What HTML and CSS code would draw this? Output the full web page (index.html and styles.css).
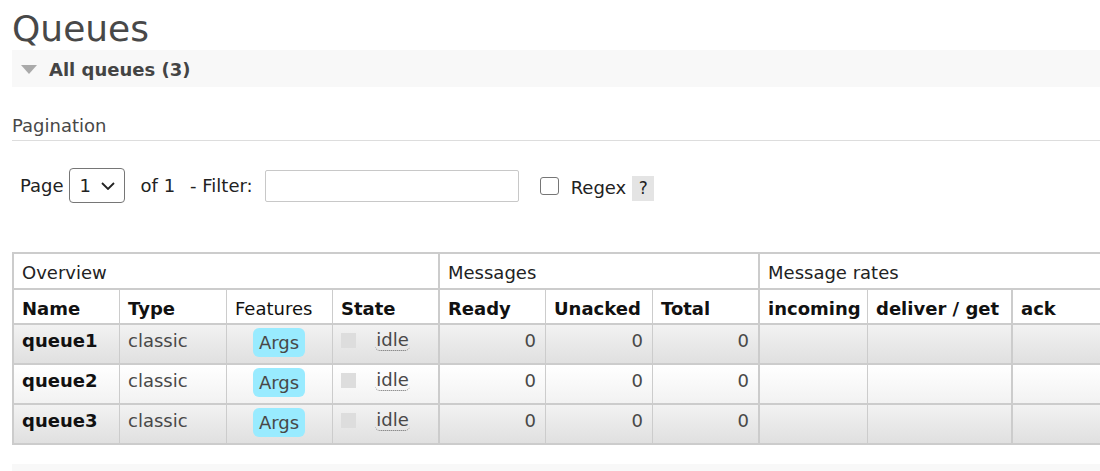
FILE: index.html
```html
<!DOCTYPE html>
<html lang="en">
<head>
<meta charset="utf-8">
<title>Queues</title>
<link rel="stylesheet" href="styles.css">
</head>
<body>
<main class="page">
  <h1 class="title">Queues</h1>
  <div class="section-head">
    <span class="toggle"></span>
    <h2 class="section-title">All queues (3)</h2>
  </div>
  <h3 class="sub-title">Pagination</h3>
  <form class="pager">
    <span class="lbl">Page</span>
    <div class="select">
      <span class="select-val">1</span>
      <svg class="chev" width="14" height="8" viewBox="0 0 14 8"><polyline points="1,1 7,7 13,1" fill="none" stroke="#222" stroke-width="1.8"/></svg>
    </div>
    <span class="lbl of">of 1</span>
    <span class="lbl filter">- Filter:</span>
    <input class="filter-input" type="text">
    <input class="check" type="checkbox">
    <span class="lbl regex">Regex</span>
    <span class="help">?</span>
  </form>

  <table class="list">
    <colgroup>
      <col class="c-name"><col class="c-type"><col class="c-feat"><col class="c-state">
      <col class="c-ready"><col class="c-unacked"><col class="c-total">
      <col class="c-in"><col class="c-deliver"><col class="c-ack">
    </colgroup>
    <thead>
      <tr class="groups">
        <th colspan="4" class="grp-end">Overview</th>
        <th colspan="3" class="grp-end">Messages</th>
        <th colspan="3" class="grp-end">Message rates</th>
      </tr>
      <tr class="cols">
        <th>Name</th>
        <th>Type</th>
        <th class="plain">Features</th>
        <th class="grp-end">State</th>
        <th>Ready</th>
        <th>Unacked</th>
        <th class="grp-end">Total</th>
        <th>incoming</th>
        <th class="grp-end">deliver / get</th>
        <th>ack</th>
      </tr>
    </thead>
    <tbody>
      <tr class="alt1">
        <td class="name">queue1</td>
        <td>classic</td>
        <td class="feat"><span class="badge">Args</span></td>
        <td class="state grp-end"><span class="key"></span><span class="idle">idle</span></td>
        <td class="num">0</td>
        <td class="num">0</td>
        <td class="num grp-end">0</td>
        <td></td>
        <td class="grp-end"></td>
        <td></td>
      </tr>
      <tr class="alt2">
        <td class="name">queue2</td>
        <td>classic</td>
        <td class="feat"><span class="badge">Args</span></td>
        <td class="state grp-end"><span class="key"></span><span class="idle">idle</span></td>
        <td class="num">0</td>
        <td class="num">0</td>
        <td class="num grp-end">0</td>
        <td></td>
        <td class="grp-end"></td>
        <td></td>
      </tr>
      <tr class="alt1">
        <td class="name">queue3</td>
        <td>classic</td>
        <td class="feat"><span class="badge">Args</span></td>
        <td class="state grp-end"><span class="key"></span><span class="idle">idle</span></td>
        <td class="num">0</td>
        <td class="num">0</td>
        <td class="num grp-end">0</td>
        <td></td>
        <td class="grp-end"></td>
        <td></td>
      </tr>
    </tbody>
  </table>

  <div class="footer-bar"></div>
</main>
</body>
</html>
```

FILE: styles.css
```css
html {
  overflow: hidden;
}

body {
  margin: 0;
  font-family: "DejaVu Sans", Verdana, sans-serif;
  color: #484848;
  background: #fff;
}

.page {
  padding-left: 12px;
}

.title {
  margin: 8px 0 0;
  font-size: 36px;
  line-height: 42px;
  font-weight: normal;
  color: #484848;
}

.section-head {
  display: flex;
  align-items: center;
  height: 37px;
  background: #f8f8f8;
}

.toggle {
  width: 0;
  height: 0;
  border-left: 8.5px solid transparent;
  border-right: 8.5px solid transparent;
  border-top: 9px solid #aaa;
  margin: 2px 12px 0 9px;
}

.section-title {
  margin: 2px 0 0;
  font-size: 18px;
  line-height: 21px;
  font-weight: bold;
  color: #444;
}

.sub-title {
  margin: 29px 0 0;
  font-size: 18px;
  line-height: 20px;
  font-weight: normal;
  padding-bottom: 4px;
  border-bottom: 1px solid #ddd;
  color: #484848;
}

.pager {
  display: flex;
  align-items: center;
  height: 35px;
  margin: 27px 0 0 8px;
}

.lbl {
  font-size: 18px;
  line-height: 21px;
  color: #222;
}

.select {
  display: flex;
  align-items: center;
  box-sizing: border-box;
  width: 56px;
  height: 35px;
  margin-left: 5px;
  border: 1px solid #767676;
  border-radius: 4px;
  background: #fff;
}

.select-val {
  font-size: 18px;
  line-height: 21px;
  color: #222;
  margin-left: 10px;
}

.chev {
  margin-left: 10px;
}

.of {
  margin-left: 16px;
}

.filter {
  margin-left: 15px;
}

.filter-input {
  box-sizing: border-box;
  width: 254px;
  height: 32px;
  margin: 0 0 0 12px;
  border: 1px solid #c8c8c8;
  border-radius: 2px;
  padding: 0 4px;
  background: #fff;
}

.check {
  appearance: none;
  -webkit-appearance: none;
  box-sizing: border-box;
  width: 19px;
  height: 18px;
  margin: 0 0 0 21px;
  border: 1px solid #767676;
  border-radius: 3px;
  background: #fff;
}

.regex {
  margin: 4px 0 0 12px;
}

.help {
  width: 22px;
  height: 25px;
  margin: 6px 0 0 6px;
  background: #e4e4e4;
  text-align: center;
  font-size: 17px;
  line-height: 25px;
  color: #222;
}

.list {
  margin-top: 49px;
  width: 1109px;
  table-layout: fixed;
  border-collapse: separate;
  border-spacing: 0;
  border-top: 2px solid #ccc;
  border-left: 2px solid #ccc;
}

.c-name { width: 106px; }
.c-type { width: 107px; }
.c-feat { width: 106px; }
.c-state { width: 107px; }
.c-ready { width: 106px; }
.c-unacked { width: 107px; }
.c-total { width: 107px; }
.c-in { width: 108px; }
.c-deliver { width: 145px; }
.c-ack { width: 108px; }

.list th,
.list td {
  box-sizing: border-box;
  padding: 0 9px 0 8px;
  border-right: 1px solid #ccc;
  border-bottom: 2px solid #ccc;
  font-size: 18px;
  line-height: 21px;
  text-align: left;
  white-space: nowrap;
  vertical-align: top;
}

.list .grp-end {
  border-right-width: 2px;
}

.groups th {
  padding-top: 8px;
  padding-bottom: 5px;
  font-weight: normal;
  color: #222;
  background: #fff;
}

.cols th {
  padding-top: 8px;
  padding-bottom: 4px;
  font-weight: bold;
  color: #111;
  background: #fff;
}

.cols th.plain {
  font-weight: normal;
}

.list td {
  height: 40px;
  padding-top: 5px;
  padding-bottom: 12px;
  color: #484848;
}

.alt1 td {
  background: linear-gradient(to bottom, #f2f2f2, #e0e0e0);
}

.alt2 td {
  background: linear-gradient(to bottom, #ffffff, #f2f2f2);
}

.list td.name {
  font-weight: bold;
  color: #111;
}

.list td.num {
  text-align: right;
}

.list td.feat {
  text-align: center;
  padding-top: 7px;
  padding-bottom: 10px;
}

.badge {
  padding: 4px 6px;
  border-radius: 6px;
  background: #99ebff;
  color: #484848;
}

.list td.state {
  text-align: center;
}

.key {
  float: left;
  width: 15px;
  height: 15px;
  margin-top: 3px;
  background: #ddd;
}

.idle {
  display: inline-block;
  vertical-align: top;
  line-height: 20px;
  border-bottom: 1px dotted #666;
  border-radius: 5px;
  padding: 0 1px;
}

.footer-bar {
  margin-top: 19px;
  height: 40px;
  background: #f8f8f8;
}
```
